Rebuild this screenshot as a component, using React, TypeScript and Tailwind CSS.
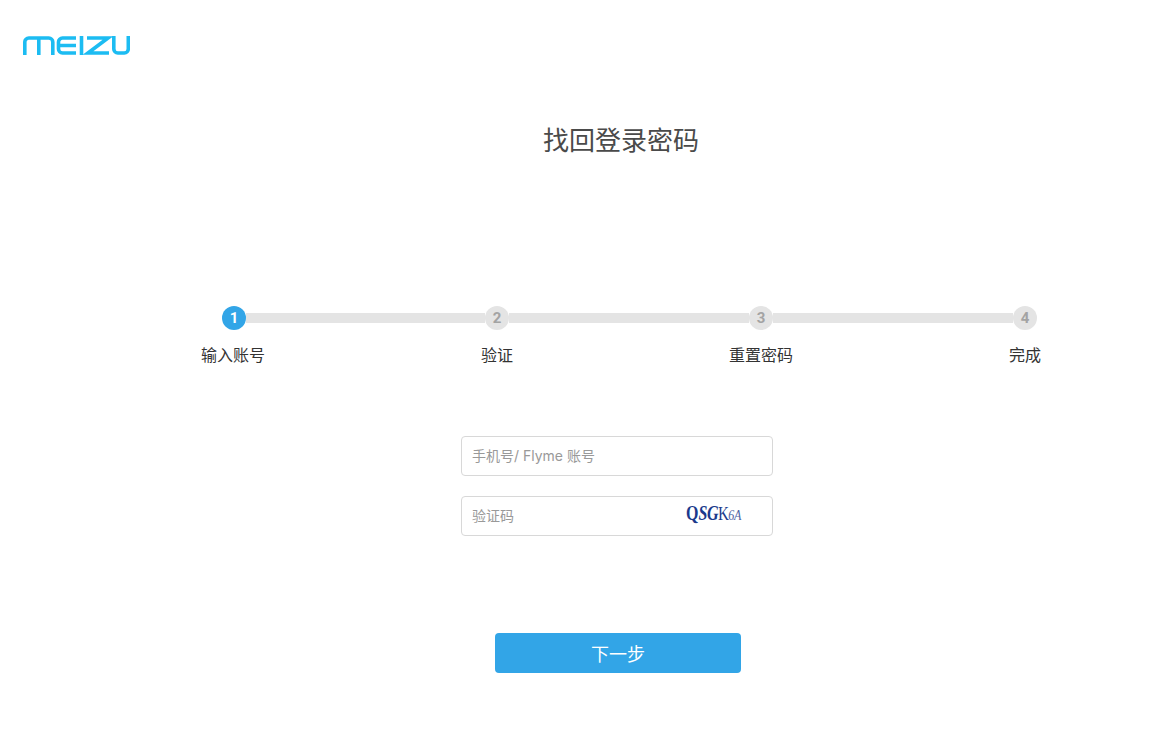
const font = "font-['Microsoft_YaHei','Noto_Sans_CJK_SC',sans-serif]";

function Logo() {
  return (
    <svg width="107" height="19" viewBox="0 0 107 19" fill="none" stroke="#1cbcf2" strokeWidth="3.6">
      <path d="M1.800 19V6a4 4 0 0 1 4-4h20a4 4 0 0 1 4 4v13M15.800 2v17" />
      <path d="M53 2H39.500a4 4 0 0 0-4 4v7a4 4 0 0 0 4 4H53M35.500 9.500H53" />
      <path d="M58.500 0v19" />
      <path d="M64 2h21L65 17h21" />
      <path d="M90.800 0v13a4 4 0 0 0 4 4h6.500a4 4 0 0 0 4-4V0" />
    </svg>
  );
}

function StepDot({ n, active }: { n: number; active?: boolean }) {
  return (
    <div
      className={`w-6 h-6 rounded-full flex items-center justify-center shrink-0 font-['Roboto',sans-serif] font-bold text-[15px] ${
        active ? 'bg-[#32a5e7] text-white' : 'bg-[#e4e4e4] text-[#a3a3a3]'
      }`}
    >
      {n}
    </div>
  );
}

const labels = ['输入账号', '验证', '重置密码', '完成'];

export default function App() {
  return (
    <div className={`w-[1175px] h-[743px] bg-white overflow-hidden ${font}`}>
      <div className="pt-9 pl-[23px] h-[117px]">
        <Logo />
      </div>

      <h1 className="text-center text-[26px] leading-[44px] text-[#4a4a4a] ml-[67px]">找回登录密码</h1>

      <div className="mt-[145px] ml-[222px] flex items-center">
        <StepDot n={1} active />
        <div className="w-[239px] h-2.5 bg-[#e4e4e4]" />
        <StepDot n={2} />
        <div className="w-[240px] h-2.5 bg-[#e4e4e4]" />
        <StepDot n={3} />
        <div className="w-[240px] h-2.5 bg-[#e4e4e4]" />
        <StepDot n={4} />
      </div>

      <div className="mt-[12px] ml-[101px] w-[1056px] grid grid-cols-4 text-center text-base leading-6 text-[#333]">
        {labels.map((l) => (
          <div key={l}>{l}</div>
        ))}
      </div>

      <div className="mt-[70px] ml-[461px] w-[312px] flex flex-col gap-5">
        <input
          placeholder="手机号/ Flyme 账号"
          className="h-10 w-full border border-[#d8d8d8] rounded pl-[10px] pb-[2px] text-sm outline-none font-['Inter','Noto_Sans_CJK_SC',sans-serif] placeholder:text-[#999]"
        />
        <div className="h-10 flex items-center border border-[#d8d8d8] rounded pl-[10px]">
          <input placeholder="验证码" className="w-[120px] pb-[2px] text-sm outline-none placeholder:text-[#999]" />
          <div className="ml-[94px] -mt-[6px] flex items-baseline origin-left scale-x-[0.8] font-['Liberation_Serif',serif] text-[#1b3a8c] leading-none">
            <span className="font-bold text-[20px]">Q</span>
            <span className="font-bold italic text-[20px] tracking-[-0.5px]">SG</span>
            <span className="text-[19px] tracking-[-1px]">K</span>
            <span className="italic text-[15px] tracking-[-0.5px] opacity-80">6A</span>
          </div>
        </div>
      </div>

      <button className="block mt-[97px] ml-[495px] w-[246px] h-10 rounded bg-[#32a5e7] text-white text-lg">
        下一步
      </button>
    </div>
  );
}
